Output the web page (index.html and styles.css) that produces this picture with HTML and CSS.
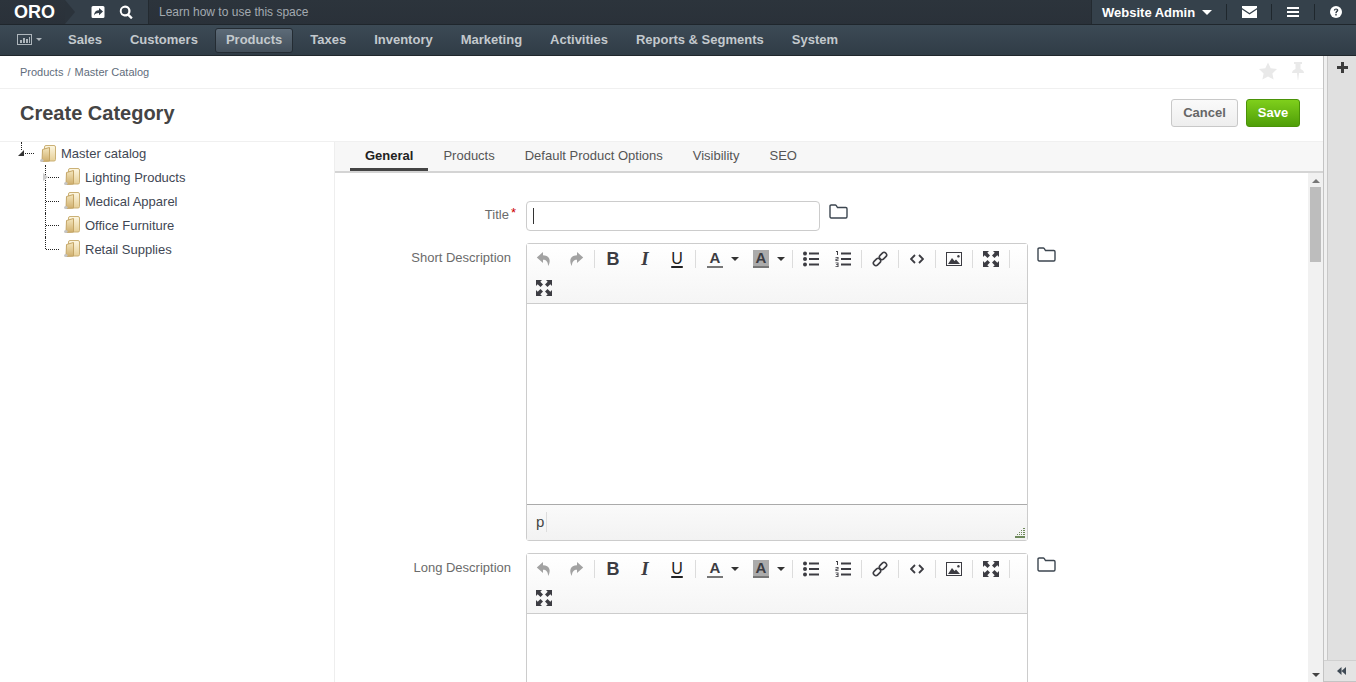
FILE: index.html
```html
<!DOCTYPE html>
<html lang="en">

<head>
    <meta charset="UTF-8">
    <title>Create Category</title>
    <link rel="stylesheet" href="styles.css">
</head>

<body>
    <svg class="sprite" width="0" height="0">
        <defs>
            <linearGradient id="book-back" x1="0" y1="0" x2="0" y2="1">
                <stop offset="0" stop-color="#fdf7e2"/>
                <stop offset="1" stop-color="#e6cf97"/>
            </linearGradient>
            <linearGradient id="book-front" x1="0" y1="0" x2="0" y2="1">
                <stop offset="0" stop-color="#f4e6bd"/>
                <stop offset="1" stop-color="#cfae6c"/>
            </linearGradient>
        </defs>
        <symbol id="i-undo" viewBox="0 0 16 16"><path d="M7 1 .8 6.600 7 12V8.800c3.200 0 4.800 1.700 5.200 6.200 3-5.500 1.600-10.500-5.200-10.800z"/></symbol>
        <symbol id="i-redo" viewBox="0 0 16 16"><path d="M9 1l6.200 5.600L9 12V8.800c-3.200 0-4.800 1.700-5.200 6.200-3-5.500-1.600-10.500 5.200-10.800z"/></symbol>
        <symbol id="i-bullets" viewBox="0 0 16 16"><circle cx="2" cy="2.500" r="2"/><circle cx="2" cy="8" r="2"/><circle cx="2" cy="13.500" r="2"/><rect x="6" y="1.500" width="10" height="2"/><rect x="6" y="7" width="10" height="2"/><rect x="6" y="12.500" width="10" height="2"/></symbol>
        <symbol id="i-numbers" viewBox="0 0 16 16"><rect x="6" y="1.500" width="10" height="2"/><rect x="6" y="7" width="10" height="2"/><rect x="6" y="12.500" width="10" height="2"/><path d="M1 0h2v4H2V1H1zM.5 6h3v2.500h-2v.7h2v.8h-3V7.800h2v-1h-2zM.5 11.500h3V16h-3v-.8h2v-1.100H1v-.8h1.500v-1h-2z"/></symbol>
        <symbol id="i-link" viewBox="0 0 16 16"><g fill="none" stroke="currentColor" stroke-width="1.600"><rect x="1" y="8.500" width="8" height="5" rx="2.400" transform="rotate(-45 5 11)"/><rect x="7" y="2.500" width="8" height="5" rx="2.400" transform="rotate(-45 11 5)"/></g></symbol>
        <symbol id="i-code" viewBox="0 0 14 10"><path d="M5 1 1 5l4 4M9 1l4 4-4 4" fill="none" stroke="currentColor" stroke-width="1.800"/></symbol>
        <symbol id="i-image" viewBox="0 0 16 14"><path fill-rule="evenodd" d="M0 0h16v14H0zM1 1v12h14V1z"/><path d="M2 12l4-6 2.500 3 1.500-1.500 4 4.500zM12.500 3a1.300 1.300 0 1 1-.1 0z"/></symbol>
        <symbol id="i-full" viewBox="0 0 16 16"><path d="M0 0h6L4.300 1.700 7 4.500 4.500 7 1.700 4.300 0 6zM16 0v6l-1.700-1.700L11.500 7 9 4.500l2.700-2.800L10 0zM0 16v-6l1.700 1.700L4.500 9 7 11.500l-2.700 2.800L6 16zM16 16h-6l1.700-1.700L9 11.500 11.500 9l2.800 2.700L16 10z"/></symbol>
        <symbol id="i-folder" viewBox="0 0 19 15"><path d="M1 12.500V2.200C1 1.500 1.500 1 2.200 1h4c.5 0 .8.200 1.100.6L8.500 3.500h8.300c.7 0 1.200.5 1.200 1.200v7.800c0 .8-.5 1.500-1.200 1.500H2.200C1.500 14 1 13.300 1 12.500z" fill="#fff" stroke="#3c4650" stroke-width="1.400"/></symbol>
        <symbol id="i-book" viewBox="0 0 16 18">
            <rect x="4.500" y=".5" width="11" height="15.500" rx="1.500" fill="url(#book-back)" stroke="#cbb176"/>
            <path d="M2.500 4.500 9.500 2.500V16L2 16.500z" fill="url(#book-front)" stroke="#c4a566"/>
            <ellipse cx="1.800" cy="15.500" rx="1.800" ry="1.500" fill="#c4c4c4"/>
        </symbol>
    </svg>

    <div class="app">
        <header class="topbar">
            <div class="logo">ORO</div>
            <div class="quick">
                <svg class="quick-icon" viewBox="0 0 14 14"><path fill-rule="evenodd" d="M2 1h10a1.500 1.500 0 0 1 1.500 1.500v9A1.500 1.500 0 0 1 12 13H2A1.500 1.500 0 0 1 .5 11.500v-9A1.500 1.500 0 0 1 2 1zm6 2v2.200C5 5.200 3.200 7 3 10.500 4.200 8.700 5.800 8 8 8v2.200l4-3.600z"/></svg>
                <svg class="quick-icon" viewBox="0 0 14 14"><path d="M6 .5a5.500 5.500 0 0 1 4.400 8.800l3.300 3.300-1.600 1.600-3.300-3.300A5.500 5.500 0 1 1 6 .5zm0 2.200a3.300 3.300 0 1 0 0 6.600 3.300 3.300 0 0 0 0-6.600z"/></svg>
            </div>
            <div class="learn">Learn how to use this space</div>
            <div class="user-tools">
                <div class="user-name">Website Admin <span class="caret caret-white"></span></div>
                <div class="tool-cell tool-mail">
                    <svg width="15" height="12" viewBox="0 0 15 12"><path d="M0 0h15v2L7.500 7 0 2zM0 3.500l7.500 5 7.500-5V12H0z" fill="#fff"/></svg>
                </div>
                <div class="tool-cell tool-menu">
                    <svg width="12" height="10" viewBox="0 0 12 10"><path d="M0 0h12v2H0zM0 4h12v2H0zM0 8h12v2H0z" fill="#fff"/></svg>
                </div>
                <div class="tool-cell tool-help">
                    <svg width="12" height="12" viewBox="0 0 12 12"><circle cx="6" cy="6" r="6" fill="#fff"/><path d="M3.800 4.500C3.900 3.100 4.800 2.400 6.100 2.400c1.300 0 2.200.8 2.200 1.800 0 1.600-1.600 1.500-1.600 3H5.300c0-2 1.500-2 1.500-2.900 0-.4-.3-.7-.8-.7-.5 0-.8.300-.9 1zM5.300 8h1.400v1.400H5.300z" fill="#2f3a44"/></svg>
                </div>
            </div>
        </header>

        <nav class="navbar">
            <div class="nav-dash">
                <svg width="15" height="11" viewBox="0 0 15 11"><path fill-rule="evenodd" d="M0 0h15v11H0zM1 1v9h13V1z" fill="#aeb6bc"/><path d="M3 6h2v3H3zM6 4h2v5H6zM9 5h2v4H9zM12 3h1v6h-1z" fill="#aeb6bc"/></svg>
                <span class="caret caret-grey"></span>
            </div>
            <a class="nav-link">Sales</a>
            <a class="nav-link">Customers</a>
            <a class="nav-link active">Products</a>
            <a class="nav-link">Taxes</a>
            <a class="nav-link">Inventory</a>
            <a class="nav-link">Marketing</a>
            <a class="nav-link">Activities</a>
            <a class="nav-link">Reports &amp; Segments</a>
            <a class="nav-link">System</a>
        </nav>

        <div class="workspace">
            <main class="main">
                <div class="breadcrumb-row">
                    <div class="breadcrumb">Products <span class="slash">/</span> Master Catalog</div>
                    <div class="page-actions">
                        <svg width="18" height="18" viewBox="0 0 18 18"><path d="M9 .5l2.700 5.800 6.300.8-4.600 4.300 1.200 6.200L9 14.500l-5.600 3.100 1.200-6.200L0 7.100l6.300-.8z" fill="#e9e9e9"/></svg>
                        <svg width="14" height="18" viewBox="0 0 14 18"><path d="M3 0h8v2H9.500v5c2 .8 3.500 2 3.500 4H8l-.8 7h-.4L6 11H1c0-2 1.500-3.200 3.500-4V2H3z" fill="#e9e9e9"/></svg>
                    </div>
                </div>

                <div class="title-row">
                    <h1>Create Category</h1>
                    <div class="title-buttons">
                        <button class="btn btn-cancel">Cancel</button>
                        <button class="btn btn-save">Save</button>
                    </div>
                </div>

                <div class="split">
                    <aside class="tree">
                        <div class="tree-root">
                            <span class="root-stem"></span>
                            <span class="root-arrow"></span>
                            <span class="root-dots"></span>
                            <svg class="book"><use href="#i-book"/></svg>
                            <span>Master catalog</span>
                        </div>
                        <ul class="tree-list">
                            <li class="tree-item has-arrow"><span class="item-dots"></span><svg class="book"><use href="#i-book"/></svg><span>Lighting Products</span></li>
                            <li class="tree-item"><span class="item-dots"></span><svg class="book"><use href="#i-book"/></svg><span>Medical Apparel</span></li>
                            <li class="tree-item"><span class="item-dots"></span><svg class="book"><use href="#i-book"/></svg><span>Office Furniture</span></li>
                            <li class="tree-item"><span class="item-dots"></span><svg class="book"><use href="#i-book"/></svg><span>Retail Supplies</span></li>
                        </ul>
                    </aside>

                    <section class="content">
                        <div class="tabs">
                            <a class="tab active">General</a>
                            <a class="tab">Products</a>
                            <a class="tab">Default Product Options</a>
                            <a class="tab">Visibility</a>
                            <a class="tab">SEO</a>
                        </div>

                        <div class="scroll-wrap">
                            <form class="form">
                                <div class="field field-title">
                                    <label class="field-label">Title<em>*</em></label>
                                    <div class="fake-input"><span class="text-cursor"></span></div>
                                    <svg class="folder folder-title"><use href="#i-folder"/></svg>
                                </div>

                                <div class="field">
                                    <label class="field-label">Short Description</label>
                                    <div class="editor">
                                        <div class="toolbar">
                                            <span class="tb-btn muted"><svg><use href="#i-undo"/></svg></span>
                                            <span class="tb-btn muted"><svg><use href="#i-redo"/></svg></span>
                                            <span class="tb-sep"></span>
                                            <span class="tb-btn tb-text tb-bold">B</span>
                                            <span class="tb-btn tb-text tb-italic">I</span>
                                            <span class="tb-btn tb-text tb-under">U</span>
                                            <span class="tb-sep"></span>
                                            <span class="tb-btn tb-split"><span class="tb-color">A</span><span class="caret caret-dark"></span></span>
                                            <span class="tb-btn tb-split tb-split-bg"><span class="tb-color tb-back">A</span><span class="caret caret-dark"></span></span>
                                            <span class="tb-sep"></span>
                                            <span class="tb-btn"><svg><use href="#i-bullets"/></svg></span>
                                            <span class="tb-btn"><svg><use href="#i-numbers"/></svg></span>
                                            <span class="tb-sep"></span>
                                            <span class="tb-btn"><svg><use href="#i-link"/></svg></span>
                                            <span class="tb-sep"></span>
                                            <span class="tb-btn"><svg class="icon-code"><use href="#i-code"/></svg></span>
                                            <span class="tb-sep"></span>
                                            <span class="tb-btn"><svg class="icon-image"><use href="#i-image"/></svg></span>
                                            <span class="tb-sep"></span>
                                            <span class="tb-btn"><svg><use href="#i-full"/></svg></span>
                                            <span class="tb-sep"></span>
                                            <span class="tb-btn"><svg><use href="#i-full"/></svg></span>
                                        </div>
                                        <div class="editor-body"></div>
                                        <div class="editor-status">
                                            <span class="path">p</span>
                                            <svg class="grip" width="10" height="10" viewBox="0 0 10 10"><path d="M8 0h2v1H8zM6 2h1v1H6zM8 2h2v1H8zM4 4h1v1H4zM6 4h1v1H6zM8 4h2v1H8zM2 6h1v1H2zM4 6h1v1H4zM6 6h1v1H6zM8 6h2v1H8zM0 8h10v2H0z" fill="#6f8a5c"/></svg>
                                        </div>
                                    </div>
                                    <svg class="folder"><use href="#i-folder"/></svg>
                                </div>

                                <div class="field">
                                    <label class="field-label">Long Description</label>
                                    <div class="editor">
                                        <div class="toolbar">
                                            <span class="tb-btn muted"><svg><use href="#i-undo"/></svg></span>
                                            <span class="tb-btn muted"><svg><use href="#i-redo"/></svg></span>
                                            <span class="tb-sep"></span>
                                            <span class="tb-btn tb-text tb-bold">B</span>
                                            <span class="tb-btn tb-text tb-italic">I</span>
                                            <span class="tb-btn tb-text tb-under">U</span>
                                            <span class="tb-sep"></span>
                                            <span class="tb-btn tb-split"><span class="tb-color">A</span><span class="caret caret-dark"></span></span>
                                            <span class="tb-btn tb-split tb-split-bg"><span class="tb-color tb-back">A</span><span class="caret caret-dark"></span></span>
                                            <span class="tb-sep"></span>
                                            <span class="tb-btn"><svg><use href="#i-bullets"/></svg></span>
                                            <span class="tb-btn"><svg><use href="#i-numbers"/></svg></span>
                                            <span class="tb-sep"></span>
                                            <span class="tb-btn"><svg><use href="#i-link"/></svg></span>
                                            <span class="tb-sep"></span>
                                            <span class="tb-btn"><svg class="icon-code"><use href="#i-code"/></svg></span>
                                            <span class="tb-sep"></span>
                                            <span class="tb-btn"><svg class="icon-image"><use href="#i-image"/></svg></span>
                                            <span class="tb-sep"></span>
                                            <span class="tb-btn"><svg><use href="#i-full"/></svg></span>
                                            <span class="tb-sep"></span>
                                            <span class="tb-btn"><svg><use href="#i-full"/></svg></span>
                                        </div>
                                        <div class="editor-body"></div>
                                    </div>
                                    <svg class="folder"><use href="#i-folder"/></svg>
                                </div>
                            </form>

                            <div class="scrollbar">
                                <span class="sb-up"></span>
                                <span class="sb-thumb"></span>
                                <span class="sb-down"></span>
                            </div>
                        </div>
                    </section>
                </div>
            </main>

            <aside class="rail">
                <div class="rail-top">
                    <div class="rail-panel">
                        <svg class="rail-plus" width="11" height="11" viewBox="0 0 11 11"><path d="M4 0h3v4h4v3H7v4H4V7H0V4h4z" fill="#3c3c3c"/></svg>
                    </div>
                </div>
                <div class="rail-toggle">
                    <svg width="9" height="8" viewBox="0 0 9 8"><path d="M4.500 0v8L0 4zM9 0v8L4.500 4z" fill="#3f4a55"/></svg>
                </div>
            </aside>
        </div>
    </div>
</body>

</html>
```

FILE: styles.css
```css
/* General Reset */
* {
    margin: 0;
    padding: 0;
    box-sizing: border-box;
}

html,
body {
    height: 100%;
    overflow: hidden;
}

body {
    font-family: "Liberation Sans", Arial, sans-serif;
    font-size: 13px;
    color: #444;
    background-color: #fff;
}

.sprite {
    position: absolute;
}

.app {
    display: flex;
    flex-direction: column;
    height: 682px;
}

/* Top bar */
.topbar {
    display: flex;
    height: 25px;
    background: linear-gradient(#2c343c, #2a3139);
    border-bottom: 1px solid #1f262c;
}

.logo {
    position: relative;
    width: 65px;
    padding-left: 14px;
    font-size: 18px;
    font-weight: bold;
    line-height: 24px;
    color: #fff;
}

.logo::after {
    content: "";
    position: absolute;
    left: 65px;
    top: 0;
    border-top: 12px solid transparent;
    border-bottom: 12px solid transparent;
    border-left: 10px solid #2b333b;
    z-index: 1;
}

.quick {
    display: flex;
    align-items: center;
    gap: 14px;
    width: 84px;
    padding-left: 26px;
    background-color: #343f49;
    border-right: 1px solid #232a30;
}

.quick-icon {
    width: 14px;
    height: 14px;
    fill: #fff;
}

.learn {
    flex: 1;
    padding-left: 10px;
    font-size: 12px;
    line-height: 25px;
    color: #a3aab0;
}

.user-tools {
    display: flex;
    align-items: center;
    width: 265px;
    background-color: #35414b;
    border-left: 1px solid #232a30;
}

.user-name {
    width: 134px;
    padding-left: 10px;
    font-weight: bold;
    color: #fff;
    white-space: nowrap;
}

.caret {
    display: inline-block;
    border-left: 5px solid transparent;
    border-right: 5px solid transparent;
    border-top: 5px solid #fff;
    vertical-align: 2px;
}

.caret-white {
    margin-left: 3px;
}

.caret-grey {
    border-width: 3px 3px 0;
    border-top-color: #aeb6bc;
    margin-left: 4px;
    vertical-align: 3px;
}

.caret-dark {
    border-width: 4px 4px 0;
    border-top-color: #333;
}

.tool-cell {
    display: flex;
    align-items: center;
    justify-content: center;
    height: 16px;
    border-left: 1px solid #1f272d;
}

.tool-mail {
    width: 45px;
}

.tool-menu {
    width: 43px;
}

.tool-help {
    width: 42px;
}

/* Main menu */
.navbar {
    display: flex;
    align-items: center;
    height: 31px;
    padding-left: 17px;
    background: linear-gradient(#3c4a55, #303c46);
    border-bottom: 1px solid #20272c;
}

.nav-dash {
    display: flex;
    align-items: center;
    width: 40px;
    margin-top: -2px;
}

.nav-link {
    padding: 0 10px 1px;
    margin-right: 6px;
    font-weight: bold;
    line-height: 22px;
    color: #c3c9cd;
    border-radius: 3px;
    border: 1px solid transparent;
}

.nav-link.active {
    background: linear-gradient(#5d6b78, #434f5a);
    border-color: #242c33;
}

/* Work area */
.workspace {
    flex: 1;
    display: flex;
    min-height: 0;
}

.main {
    flex: 1;
    display: flex;
    flex-direction: column;
    min-width: 0;
}

.breadcrumb-row {
    display: flex;
    align-items: center;
    justify-content: space-between;
    height: 33px;
    padding: 0 18px 0 20px;
    border-bottom: 1px solid #f0f0f0;
}

.breadcrumb {
    font-size: 11px;
    color: #5f6d7c;
}

.slash {
    margin: 0 1px;
    color: #777;
}

.page-actions {
    display: flex;
    align-items: center;
    gap: 14px;
    margin-bottom: 3px;
}

.title-row {
    display: flex;
    align-items: center;
    justify-content: space-between;
    height: 53px;
    padding: 0 23px 3px 20px;
    border-bottom: 1px solid #f0f0f0;
}

h1 {
    font-size: 20px;
    font-weight: bold;
    color: #444;
}

.title-buttons {
    display: flex;
    gap: 8px;
    margin-bottom: 2px;
}

.btn {
    height: 28px;
    font-family: inherit;
    font-size: 13px;
    font-weight: bold;
    border-radius: 3px;
}

.btn-cancel {
    width: 67px;
    color: #666;
    background: linear-gradient(#fafafa, #eee);
    border: 1px solid #c8c8c8;
}

.btn-save {
    width: 54px;
    color: #fff;
    background: linear-gradient(#7fcf1c, #4f9e08);
    border: 1px solid #4a9208;
}

.split {
    flex: 1;
    display: flex;
    min-height: 0;
}

/* Category tree */
.tree {
    width: 335px;
    flex-shrink: 0;
    border-right: 1px solid #eee;
    color: #3f4754;
}

.tree-root {
    position: relative;
    display: flex;
    align-items: center;
    height: 23px;
    padding-left: 40px;
}

.book {
    width: 16px;
    height: 18px;
    margin-right: 5px;
    flex-shrink: 0;
}

.root-stem {
    position: absolute;
    left: 21px;
    top: 0;
    height: 8px;
    border-left: 1px dotted #222;
}

.root-arrow {
    position: absolute;
    left: 18px;
    top: 8px;
    border-left: 6px solid transparent;
    border-bottom: 6px solid #333;
}

.root-dots {
    position: absolute;
    left: 25px;
    top: 11px;
    width: 9px;
    border-top: 1px dotted #222;
}

.tree-list {
    list-style: none;
    margin-left: 45px;
}

.tree-item {
    position: relative;
    display: flex;
    align-items: center;
    height: 24px;
    padding-left: 18px;
    border-left: 1px dotted #222;
}

.tree-item:last-child {
    border-left-color: transparent;
}

.tree-item:last-child::before {
    content: "";
    position: absolute;
    left: -1px;
    top: 0;
    height: 12px;
    border-left: 1px dotted #222;
}

.item-dots {
    position: absolute;
    left: 0;
    top: 12px;
    width: 13px;
    border-top: 1px dotted #222;
}

.has-arrow::after {
    content: "";
    position: absolute;
    left: -3px;
    top: 8px;
    border-top: 4px solid transparent;
    border-bottom: 4px solid transparent;
    border-left: 5px solid #ccc;
}

/* Tabs and form */
.content {
    flex: 1;
    display: flex;
    flex-direction: column;
    min-width: 0;
}

.tabs {
    display: flex;
    height: 31px;
    padding-left: 15px;
    background-color: #f7f7f7;
    border-bottom: 2px solid #d4d4d4;
}

.tab {
    height: 29px;
    padding: 0 15px;
    line-height: 27px;
    color: #555;
}

.tab.active {
    font-weight: bold;
    color: #222;
    border-bottom: 3px solid #444;
}

.scroll-wrap {
    flex: 1;
    display: flex;
    min-height: 0;
}

.form {
    flex: 1;
    min-width: 0;
    overflow: hidden;
    padding-top: 28px;
}

.field {
    display: flex;
    align-items: flex-start;
    margin-bottom: 12px;
}

.field-label {
    width: 176px;
    flex-shrink: 0;
    padding-top: 7px;
    margin-right: 15px;
    text-align: right;
    color: #6b6b6b;
}

.field-title .field-label {
    padding-top: 4px;
}

.field-label em {
    color: #c00;
    font-style: normal;
    margin: 0 -5px 0 2px;
    vertical-align: 2px;
}

.fake-input {
    display: flex;
    align-items: center;
    width: 294px;
    height: 30px;
    padding-left: 6px;
    background-color: #fff;
    border: 1px solid #ccc;
    border-radius: 4px;
}

.text-cursor {
    width: 1px;
    height: 16px;
    background-color: #333;
}

.folder {
    width: 19px;
    height: 15px;
    margin: 4px 0 0 9px;
    flex-shrink: 0;
}

.folder-title {
    margin-top: 3px;
}

.editor {
    width: 502px;
    flex-shrink: 0;
    border: 1px solid #ccc;
    border-radius: 3px;
}

.toolbar {
    display: flex;
    flex-wrap: wrap;
    align-items: center;
    align-content: flex-start;
    height: 60px;
    padding-left: 1px;
    background: linear-gradient(#fff, #f5f5f5);
    border-bottom: 1px solid #ccc;
}

.tb-btn {
    display: flex;
    align-items: center;
    justify-content: center;
    width: 32px;
    height: 29px;
    color: #3c3c42;
    fill: currentColor;
}

.tb-btn svg {
    width: 16px;
    height: 16px;
}

.tb-btn svg.icon-code {
    width: 14px;
    height: 10px;
}

.tb-btn svg.icon-image {
    height: 14px;
}

.tb-btn.muted {
    color: #a2a2a2;
}

.tb-sep {
    width: 1px;
    height: 18px;
    margin: 0 2px;
    background-color: #dcdcdc;
}

.tb-text {
    padding-top: 1px;
    font-size: 18px;
    font-weight: bold;
}

.tb-italic {
    font-style: italic;
    font-family: "Liberation Serif", serif;
    font-size: 19px;
}

.tb-under {
    font-size: 16px;
    font-weight: normal;
    color: #222;
    text-decoration: underline;
    text-decoration-thickness: 2px;
    text-underline-offset: 2px;
}

.tb-split {
    justify-content: flex-start;
    gap: 8px;
    width: 46px;
    padding-left: 9px;
}

.tb-split-bg {
    width: 46px;
    padding-left: 9px;
}

.tb-color {
    width: 16px;
    height: 18px;
    font-size: 15px;
    font-weight: bold;
    line-height: 16px;
    text-align: center;
    border-bottom: 2px solid #777;
}

.tb-back {
    background-color: #ababab;
}

.editor-body {
    height: 201px;
    background-color: #fff;
    border-bottom: 1px solid #aaa;
}

.editor-status {
    display: flex;
    align-items: center;
    justify-content: space-between;
    height: 35px;
    padding: 0 2px 2px 9px;
    background: linear-gradient(#fafafa, #f2f2f2);
}

.path {
    padding-right: 2px;
    font-size: 15px;
    line-height: 20px;
    border-right: 1px solid #ddd;
    color: #444;
}

.grip {
    align-self: flex-end;
}

/* Fake scrollbar, the browser's own one changes with the platform */
.scrollbar {
    display: flex;
    flex-direction: column;
    align-items: center;
    width: 15px;
    background-color: #f1f1f1;
}

.sb-up {
    margin-top: 6px;
    border-left: 4px solid transparent;
    border-right: 4px solid transparent;
    border-bottom: 4px solid #777;
}

.sb-thumb {
    width: 11px;
    height: 75px;
    margin-top: 4px;
    background-color: #bdbdbd;
}

.sb-down {
    margin-top: auto;
    margin-bottom: 5px;
    border-left: 4px solid transparent;
    border-right: 4px solid transparent;
    border-top: 4px solid #444;
}

/* Right rail */
.rail {
    display: flex;
    flex-direction: column;
    width: 33px;
    flex-shrink: 0;
    border-left: 1px solid #c4c4c4;
    background-color: #f0f0f0;
}

.rail-top {
    flex: 1;
    padding-left: 3px;
}

.rail-panel {
    display: flex;
    justify-content: center;
    height: 100%;
    padding-top: 6px;
    background-color: #e0e0e0;
    border-left: 1px solid #c8c8c8;
}

.rail-toggle {
    display: flex;
    align-items: center;
    justify-content: center;
    height: 22px;
    padding-left: 3px;
    background-color: #e4e4e4;
    border-top: 1px solid #d0d0d0;
    border-bottom: 1px solid #c4c4c4;
}
```
